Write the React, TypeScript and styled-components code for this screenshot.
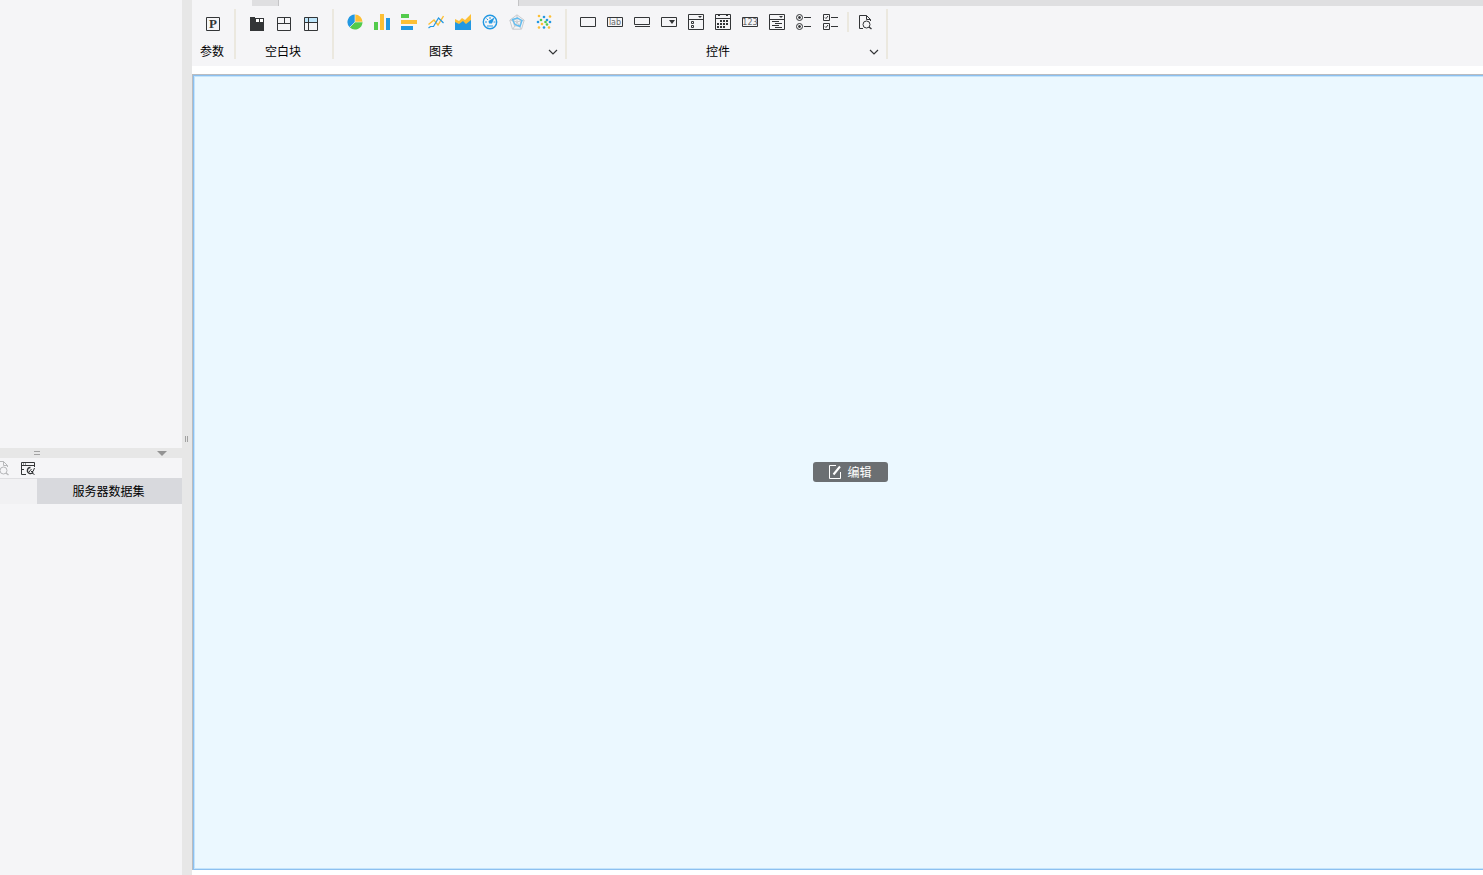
import React from "react";
import styled, { createGlobalStyle } from "styled-components";

const ink = "#333537";
const blue = "#2298e2";
const yellow = "#fcbf35";
const green = "#53cb4c";
const surface = "#f5f5f7";

const GlobalStyle = createGlobalStyle`
  *, *::before, *::after { box-sizing: border-box; }
  body {
    margin: 0;
    overflow: hidden;
    background: #fff;
    color: #000;
    font: 12px/16px "Noto Sans CJK SC", sans-serif;
  }
  button { font: inherit; color: inherit; }
`;

const Page = styled.div`
  display: grid;
  grid-template-columns: 182px 10px minmax(0, 1fr);
  height: 100vh;
`;

const SidePanel = styled.aside`
  display: grid;
  grid-template-rows: minmax(0, 448fr) 10px minmax(0, 417fr);
  background: ${surface};
  overflow: hidden;
`;

const Pane = styled.section`
  min-width: 0;
`;

const HorizontalSplitter = styled.div`
  display: flex;
  align-items: center;
  justify-content: space-between;
  padding: 0 15px 0 34px;
  background: #e7e7e7;
`;

const VerticalSplitter = styled.div`
  display: flex;
  align-items: center;
  padding: 3px 0 0 3px;
  background: #e7e7e7;
`;

const DataToolbar = styled.div`
  display: flex;
  align-items: center;
  gap: 10px;
  height: 20px;
  margin-left: -6px;
`;

const IconButton = styled.button`
  display: block;
  flex: none;
  padding: 0;
  border: 0;
  background: none;
  line-height: 0;
`;

const Tabs = styled.div`
  display: grid;
  grid-template-columns: 37px 1fr;
  height: 26px;
`;

const DataTab = styled.button<{ $active?: boolean }>`
  padding: 0 2px 2px 0;
  border: 0;
  border-top: 1px solid ${(p) => (p.$active ? "#d8d9dd" : "#dfdfe2")};
  background: ${(p) => (p.$active ? "#d8d9dd" : "#f1f1f3")};
`;

const Main = styled.main`
  display: flex;
  flex-direction: column;
  min-width: 0;
  overflow: hidden;
`;

const TabStrip = styled.div`
  display: flex;
  flex: none;
  height: 6px;
  background: #dfdfe1;
`;

const SheetTab = styled.div<{ $width: number; $active?: boolean; $edge?: boolean }>`
  width: ${(p) => p.$width}px;
  border-right: ${(p) => (p.$edge ? "1px solid #c4c4c6" : "0")};
  background: ${(p) => (p.$active ? surface : "#dfdfe1")};
`;

const Ribbon = styled.div`
  display: flex;
  flex: none;
  height: 60px;
  padding: 3px 0 7px;
  background: ${surface};
`;

const Group = styled.section<{ $low?: boolean }>`
  display: flex;
  flex-direction: column;
  justify-content: space-between;
  padding-top: ${(p) => (p.$low ? 7 : 5)}px;
  border-right: 2px solid #ebe8df;
`;

const IconRow = styled.div`
  display: flex;
  align-items: center;
  gap: 11px;
  height: 16px;
  padding: 0 13px;
`;

const LabelRow = styled.div<{ $menu?: boolean }>`
  display: flex;
  align-items: center;
  height: 16px;
  padding: ${(p) => (p.$menu ? "0 0 0 7px" : "0 2px 0 0")};
`;

const Label = styled.span`
  flex: 1;
  text-align: center;
`;

const Chevron = styled(IconButton)`
  display: flex;
  justify-content: center;
  width: 24px;
  padding-top: 2px;
`;

const Divider = styled.span`
  flex: none;
  width: 2px;
  height: 20px;
  margin: 0 -3px;
  background: #ebe8df;
`;

const Workspace = styled.div`
  display: flex;
  flex: 1;
  min-height: 0;
  padding: 8px 0 5px;
  background: #fff;
`;

const Canvas = styled.div`
  display: flex;
  flex: 1;
  align-items: center;
  justify-content: center;
  margin-right: -26px;
  padding-bottom: 2px;
  border: 1px solid #b9bcc0;
  border-bottom: 0;
  background: #ebf8ff;
  box-shadow: inset 0 0 0 1px #8cc0f0, inset 0 0 0 2px #c4e4fb;
`;

const EditButton = styled.button`
  display: flex;
  align-items: center;
  gap: 5px;
  height: 20px;
  padding: 0 16px 0 15px;
  border: 0;
  border-radius: 3px;
  background: #6b6f72;
  color: #fff;
`;

const Glyphs = styled.text<{ $serif?: boolean }>`
  fill: ${(p) => (p.$serif ? ink : "#66686a")};
  stroke: none;
  text-anchor: middle;
  font: ${(p) => (p.$serif ? 'bold 13px "Liberation Serif", serif' : '8px "DejaVu Sans", sans-serif')};
`;

const Icon = ({ children }: { children: React.ReactNode }) => (
  <svg width="16" height="16" viewBox="0 0 16 16" fill="none" stroke={ink} aria-hidden="true">
    {children}
  </svg>
);

const Tool = ({ name, children }: { name: string; children: React.ReactNode }) => (
  <IconButton type="button" aria-label={name}>
    <Icon>{children}</Icon>
  </IconButton>
);

const previewPath = (
  <>
    <path d="M6 14.5H2.5v-13h7l4 4V7M9.5 1.5v4h4" />
    <circle cx="9.5" cy="10.5" r="3.5" />
    <path d="M12 13l2.5 2" strokeWidth="1.4" />
  </>
);

const controlBox = <path d="M.5 3.5h15v9H.5z" />;

const More = () => (
  <Chevron type="button" aria-label="更多">
    <svg width="10" height="6" viewBox="0 0 10 6" fill="none" stroke={ink} strokeWidth="1.2" aria-hidden="true">
      <path d="M1 1l4 4 4-4" />
    </svg>
  </Chevron>
);

const dots: [number, number, string][] = [
  [3, 2, yellow], [8, 3, blue], [14, 2.5, yellow], [5, 6, green], [11, 6, blue],
  [2, 8, blue], [6, 10, yellow], [14, 8, blue], [9.5, 8, green], [13, 13.5, yellow],
  [3, 13.5, yellow], [8, 13.5, blue], [11, 10.5, green],
];

export default function App() {
  return (
    <>
      <GlobalStyle />
      <Page>
        <SidePanel>
          <Pane />
          <HorizontalSplitter>
            <svg width="6" height="4" stroke="#a2a2a2" aria-hidden="true">
              <path d="M0 .5h6M0 3.5h6" />
            </svg>
            <svg width="10" height="5" fill="#939393" aria-hidden="true">
              <path d="M0 0h10L5 5z" />
            </svg>
          </HorizontalSplitter>
          <Pane>
            <DataToolbar>
              <IconButton type="button" aria-label="预览">
                <svg width="16" height="16" fill="none" stroke="#b7b8ba" aria-hidden="true">{previewPath}</svg>
              </IconButton>
              <Tool name="数据集设置">
                <path d="M6 14.5H1.5v-12h13V7M1.5 5.5h13M3 4h1M5 4h1" />
                <path d="M2 9.5h2" />
                <path d="M10.5 7.5A3 3 0 1 0 13 12" strokeWidth="1.3" />
                <path d="M9 12l2.5-3M11 11.5h2l1.5-3.5M12 13l2.5 1.5" />
              </Tool>
            </DataToolbar>
            <Tabs>
              <DataTab type="button" aria-label="模板数据集" />
              <DataTab type="button" $active>服务器数据集</DataTab>
            </Tabs>
          </Pane>
        </SidePanel>
        <VerticalSplitter>
          <svg width="4" height="6" stroke="#a2a2a2" aria-hidden="true">
            <path d="M.5 0v6M2.5 0v6" />
          </svg>
        </VerticalSplitter>
        <Main>
          <TabStrip>
            <SheetTab $width={60} $active />
            <SheetTab $width={27} $edge />
            <SheetTab $width={240} $active $edge />
          </TabStrip>
          <Ribbon>
            <Group $low>
              <IconRow>
                <Tool name="参数">
                  <path d="M1.5 1.5h13v13h-13z" />
                  <Glyphs $serif x="8" y="12">P</Glyphs>
                </Tool>
              </IconRow>
              <LabelRow><Label>参数</Label></LabelRow>
            </Group>
            <Group $low>
              <IconRow>
                <Tool name="tab块">
                  <path d="M1 1h5v1h9v13H1z" fill={ink} stroke="none" />
                  <path d="M7 3h3v3H7zM11 3h3v3h-3z" fill="#fff" stroke="none" />
                </Tool>
                <Tool name="绝对画布块">
                  <path d="M1.5 1.5h13v13h-13zM1.5 7.5h13M8.5 1.5v6" />
                </Tool>
                <Tool name="报表块">
                  <path d="M1 1h14v5H1z" fill="#bfe6fb" stroke="none" />
                  <path d="M1.5 1.5h13v13h-13zM1.5 6.5h13M5.5 1.5v13" />
                </Tool>
              </IconRow>
              <LabelRow><Label>空白块</Label></LabelRow>
            </Group>
            <Group>
              <IconRow>
                <Tool name="饼图">
                  <g stroke="none">
                    <path d="M8 8V.5A7.5 7.5 0 0 0 2.7 13.3z" fill={blue} />
                    <path d="M8 8V.5A7.5 7.5 0 0 1 15.5 8z" fill={yellow} />
                    <path d="M8 8h7.5A7.5 7.5 0 0 1 2.7 13.3z" fill={green} />
                  </g>
                  <path d="M8 .5V8l-5.3 5.3M8 8h7.5" stroke={surface} strokeWidth=".6" />
                </Tool>
                <Tool name="柱形图">
                  <g stroke="none">
                    <path d="M0 8h4v8H0z" fill={green} />
                    <path d="M6 0h4v16H6z" fill={yellow} />
                    <path d="M12 4h4v12h-4z" fill={blue} />
                  </g>
                </Tool>
                <Tool name="条形图">
                  <g stroke="none">
                    <path d="M0 0h8v4H0z" fill={green} />
                    <path d="M0 6h16v4H0z" fill={yellow} />
                    <path d="M0 12h12v4H0z" fill={blue} />
                  </g>
                </Tool>
                <Tool name="折线图">
                  <path d="M.5 10.5L6 6l4 5 5.5-9" stroke={yellow} strokeWidth="1.4" />
                  <path d="M.5 14l2-1.5h3l5-8.5L15.5 9" stroke={blue} strokeWidth="1.2" />
                </Tool>
                <Tool name="面积图">
                  <path d="M0 5l4 2 3-3 3 2 6-6v12H0z" fill={yellow} stroke="none" />
                  <path d="M0 8l4 2 4-3 3 3 5-4v10H0z" fill={blue} stroke="none" />
                </Tool>
                <Tool name="仪表盘">
                  <circle cx="8" cy="8" r="6.7" stroke={blue} strokeWidth="1.4" />
                  <path d="M8 3v2M3 8h2M11.5 8h2M4.5 4.5L6 6M5 12h6" stroke={blue} />
                  <path d="M12.5 3.5L10 9.5H7L6.5 7z" fill={blue} stroke="none" />
                </Tool>
                <Tool name="雷达图">
                  <path d="M8 .8l7.2 5.4-2.7 9h-9l-2.7-9zM8 4l4 3-1.5 5h-5L4 7zM8 1v7M1 6l7 2 7-2M4 15l4-7 4 7" stroke="#c8cbcf" />
                  <path d="M3.5 5.5l5-1.5 4.5 2.5-2 6-5-2z" stroke="#62bdf0" strokeWidth="1.4" />
                </Tool>
                <Tool name="散点图">
                  {dots.map(([x, y, color]) => (
                    <circle key={`${x}-${y}`} cx={x} cy={y} r="1.3" fill={color} stroke="none" />
                  ))}
                </Tool>
              </IconRow>
              <LabelRow $menu><Label>图表</Label><More /></LabelRow>
            </Group>
            <Group>
              <IconRow>
                <Tool name="文本控件">{controlBox}</Tool>
                <Tool name="标签控件">
                  {controlBox}
                  <Glyphs x="8" y="11">lab</Glyphs>
                </Tool>
                <Tool name="按钮控件">
                  <path d="M.5 3.5h15v7H.5zM1 12.5h15" />
                </Tool>
                <Tool name="下拉框控件">
                  {controlBox}
                  <path d="M8 6h6l-3 4z" fill={ink} stroke="none" />
                </Tool>
                <Tool name="下拉复选框控件">
                  <path d="M.5.5h15v15H.5zM.5 5.5h15M3.5 7.5h2v2h-2zM3.5 11.5h2v2h-2z" />
                  <path d="M10 2h4l-2 2z" fill={ink} stroke="none" />
                </Tool>
                <Tool name="日期控件">
                  <path d="M.5.5h15v15H.5zM.5 4.5h15M3 1.5h2M11 1.5h2" />
                  <path d="M5 7h8M2 10h11M2 13h8" strokeWidth="2" strokeDasharray="2 1" />
                </Tool>
                <Tool name="数字控件">
                  {controlBox}
                  <Glyphs x="8" y="11">123</Glyphs>
                </Tool>
                <Tool name="下拉树控件">
                  <path d="M.5.5h15v15H.5zM.5 5.5h15M3 7.5h7M6 9.5h7M3 11.5h7M6 13.5h7" />
                  <path d="M10 2h4l-2 2z" fill={ink} stroke="none" />
                </Tool>
                <Tool name="单选按钮组控件">
                  <circle cx="3.5" cy="3.5" r="3" />
                  <circle cx="3.5" cy="12.5" r="3" />
                  <path d="M8 3.5h7M8 12.5h7" />
                  <circle cx="3.5" cy="3.5" r="1" fill={ink} />
                  <circle cx="3.5" cy="12.5" r="1" fill={ink} />
                </Tool>
                <Tool name="复选按钮组控件">
                  <path d="M.5.5h6v6h-6zM.5 9.5h6v6h-6zM8 3.5h7M8 12.5h7M2 3.5l1 1 2-2.5M2 12.5l1 1 2-2.5" />
                </Tool>
                <Divider />
                <Tool name="查询控件">{previewPath}</Tool>
              </IconRow>
              <LabelRow $menu><Label>控件</Label><More /></LabelRow>
            </Group>
          </Ribbon>
          <Workspace>
            <Canvas>
              <EditButton type="button">
                <svg width="14" height="16" fill="none" stroke="#fff" aria-hidden="true">
                  <path d="M8 1.5H1.5v13h11V8" />
                  <path d="M5.5 10.5L12 2.5" strokeWidth="2" />
                </svg>
                编辑
              </EditButton>
            </Canvas>
          </Workspace>
        </Main>
      </Page>
    </>
  );
}
